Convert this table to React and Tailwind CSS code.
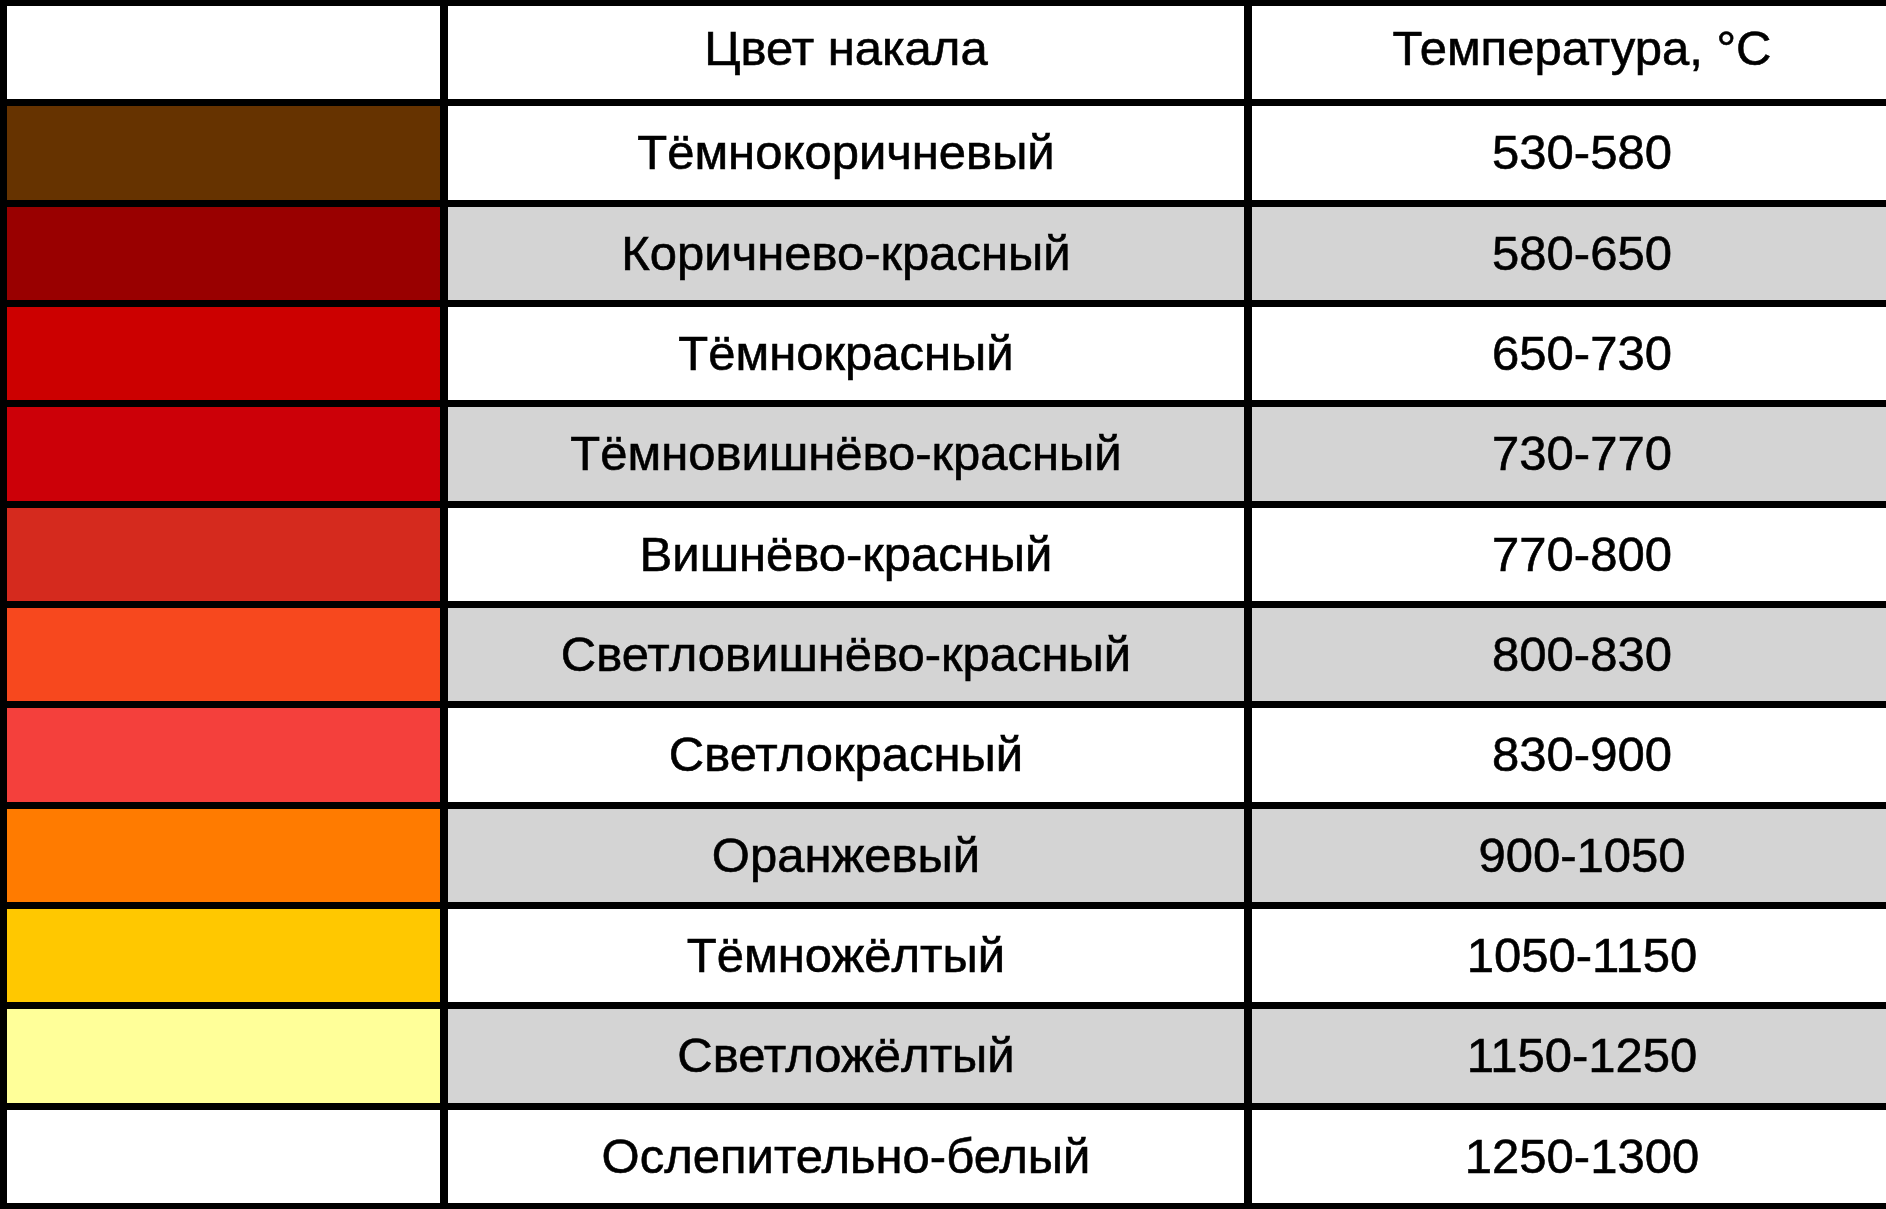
import React from 'react';

const rows = [
  { swatch: 'bg-[#663300]', name: 'Тёмнокоричневый', temp: '530-580' },
  { swatch: 'bg-[#990000]', name: 'Коричнево-красный', temp: '580-650' },
  { swatch: 'bg-[#cc0000]', name: 'Тёмнокрасный', temp: '650-730' },
  { swatch: 'bg-[#cc0008]', name: 'Тёмновишнёво-красный', temp: '730-770' },
  { swatch: 'bg-[#d52a1e]', name: 'Вишнёво-красный', temp: '770-800' },
  { swatch: 'bg-[#f7481e]', name: 'Светловишнёво-красный', temp: '800-830' },
  { swatch: 'bg-[#f4403c]', name: 'Светлокрасный', temp: '830-900' },
  { swatch: 'bg-[#ff7b00]', name: 'Оранжевый', temp: '900-1050' },
  { swatch: 'bg-[#ffc800]', name: 'Тёмножёлтый', temp: '1050-1150' },
  { swatch: 'bg-[#ffff99]', name: 'Светложёлтый', temp: '1150-1250' },
  { swatch: 'bg-white', name: 'Ослепительно-белый', temp: '1250-1300' },
];

// text in the table is slightly heavier than plain regular
const cell = 'flex items-center justify-center leading-none [-webkit-text-stroke:0.6px_black]';

const App = () => {
  return (
    <div className="w-[1886px] h-[1209px] overflow-hidden bg-black font-['Liberation_Sans',Arial,sans-serif] text-[49px] text-black">
      <div className="grid h-full w-max grid-cols-[433px_796px_660px] grid-rows-[repeat(12,minmax(0,1fr))] gap-x-[8px] gap-y-[7px] pl-[7px] py-[6px]">
        {/* header */}
        <div className="bg-white" />
        <div className={`${cell} bg-white pb-[8px]`}>Цвет накала</div>
        <div className={`${cell} bg-white pb-[8px]`}>Температура, °C</div>

        {rows.map((row, i) => {
          const bg = i % 2 === 1 ? 'bg-[#d4d4d4]' : 'bg-white';
          return (
            <React.Fragment key={row.temp}>
              <div className={row.swatch} />
              <div className={`${cell} ${bg}`}>{row.name}</div>
              <div className={`${cell} ${bg}`}>{row.temp}</div>
            </React.Fragment>
          );
        })}
      </div>
    </div>
  );
};

export default App;
